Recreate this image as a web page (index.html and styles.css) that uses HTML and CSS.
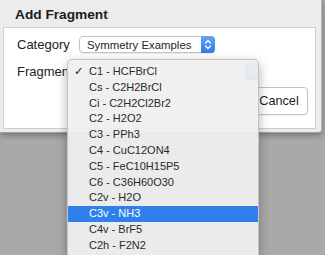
FILE: index.html
```html
<!DOCTYPE html>
<html>
<head>
<meta charset="utf-8">
<link rel="stylesheet" href="styles.css">
</head>
<body>
<div class="dialog">
  <div class="title">Add Fragment</div>
  <div class="panel">
    <div class="form">
      <span class="label">Category</span>
      <div class="select select-category">
        <span class="select-text">Symmetry Examples</span>
        <span class="stepper">
          <svg width="8" height="11" viewBox="0 0 8 11"><path d="M1.5 4 L4 1.5 L6.5 4 M1.5 7 L4 9.5 L6.5 7" fill="none" stroke="#fff" stroke-width="1.3" stroke-linecap="round" stroke-linejoin="round"/></svg>
        </span>
      </div>
      <span class="label">Fragmen</span>
      <div class="select select-fragment">
        <span class="select-text"></span>
        <span class="stepper">
          <svg width="8" height="11" viewBox="0 0 8 11"><path d="M1.5 4 L4 1.5 L6.5 4 M1.5 7 L4 9.5 L6.5 7" fill="none" stroke="#fff" stroke-width="1.3" stroke-linecap="round" stroke-linejoin="round"/></svg>
        </span>
      </div>
    </div>
    <div class="buttons">
      <button class="btn">Cancel</button>
    </div>
  </div>
</div>
<div class="menu">
  <div class="item"><span class="check">✓</span>C1 - HCFBrCl</div>
  <div class="item"><span class="check"></span>Cs - C2H2BrCl</div>
  <div class="item"><span class="check"></span>Ci - C2H2Cl2Br2</div>
  <div class="item"><span class="check"></span>C2 - H2O2</div>
  <div class="item"><span class="check"></span>C3 - PPh3</div>
  <div class="item"><span class="check"></span>C4 - CuC12ON4</div>
  <div class="item"><span class="check"></span>C5 - FeC10H15P5</div>
  <div class="item"><span class="check"></span>C6 - C36H60O30</div>
  <div class="item"><span class="check"></span>C2v - H2O</div>
  <div class="item selected"><span class="check"></span>C3v - NH3</div>
  <div class="item"><span class="check"></span>C4v - BrF5</div>
  <div class="item"><span class="check"></span>C2h - F2N2</div>
</div>
</body>
</html>
```

FILE: styles.css
```css
html, body {
  margin: 0;
  padding: 0;
}
body {
  width: 325px;
  height: 255px;
  overflow: hidden;
  background: #a9a9a9;
  font-family: "Liberation Sans", Arial, sans-serif;
  color: #222;
  position: relative;
}
.dialog {
  width: 322px;
  box-sizing: border-box;
  background: #ececec;
  border-right: 1px solid #b8b8b8;
  border-bottom: 1px solid #a0a0a0;
  padding: 0 5px 3px 3px;
  box-shadow: 0 2px 6px rgba(0,0,0,0.35);
  border-bottom-right-radius: 4px;
}
.title {
  height: 27px;
  box-sizing: border-box;
  padding-left: 12px;
  padding-top: 7px;
  font-weight: bold;
  font-size: 13.7px;
  color: #1c1c1c;
}
.panel {
  background: #fff;
  border: 1px solid #cfcfcf;
  height: 102px;
  box-sizing: border-box;
  padding: 8px 7px 0 13px;
  display: flex;
  flex-direction: column;
}
.form {
  display: grid;
  grid-template-columns: 62px 1fr;
  row-gap: 10px;
  align-items: center;
}
.label {
  font-size: 13px;
  color: #222;
  white-space: nowrap;
}
.select {
  height: 17px;
  box-sizing: border-box;
  border: 1px solid #c4c4c4;
  border-radius: 4px;
  background: #fff;
  display: flex;
  align-items: center;
  box-shadow: 0 1px 1px rgba(0,0,0,0.08);
}
.select-category {
  width: 136px;
}
.select-fragment {
  width: 180px;
}
.select-text {
  flex: 1;
  padding-left: 7px;
  font-size: 11.4px;
  color: #262626;
}
.stepper {
  width: 14px;
  height: 17px;
  margin: -1px -1px -1px 0;
  border-radius: 0 4px 4px 0;
  background: linear-gradient(#62a5f8, #2e7ce9);
  display: flex;
  align-items: center;
  justify-content: center;
}
.buttons {
  display: flex;
  justify-content: flex-end;
  margin-top: 7px;
}
.btn {
  width: 72px;
  height: 28px;
  box-sizing: border-box;
  background: #fff;
  border: 1px solid #c3c3c3;
  border-radius: 4px;
  font-family: "Liberation Sans", Arial, sans-serif;
  font-size: 12.7px;
  color: #1e1e1e;
  padding: 0 0 0 14px;
  text-align: center;
  box-shadow: 0 1px 1px rgba(0,0,0,0.06);
}
.menu {
  position: absolute;
  left: 67px;
  top: 59px;
  width: 192px;
  height: 196px;
  box-sizing: border-box;
  background: rgba(239,239,239,0.94);
  border: 1px solid #c4c4c4;
  border-bottom: none;
  border-radius: 5px 5px 0 0;
  padding-top: 4px;
  box-shadow: 0 4px 12px rgba(0,0,0,0.3);
  overflow: hidden;
}
.item {
  height: 15.8px;
  line-height: 15.8px;
  font-size: 11px;
  color: #2a2a2a;
  display: flex;
  white-space: nowrap;
}
.check {
  width: 21px;
  padding-left: 6px;
  box-sizing: border-box;
  font-family: "DejaVu Sans", sans-serif;
  font-size: 11.5px;
  color: #2a2a2a;
}
.item.selected {
  background: #2f80ed;
  color: #fff;
}
```
